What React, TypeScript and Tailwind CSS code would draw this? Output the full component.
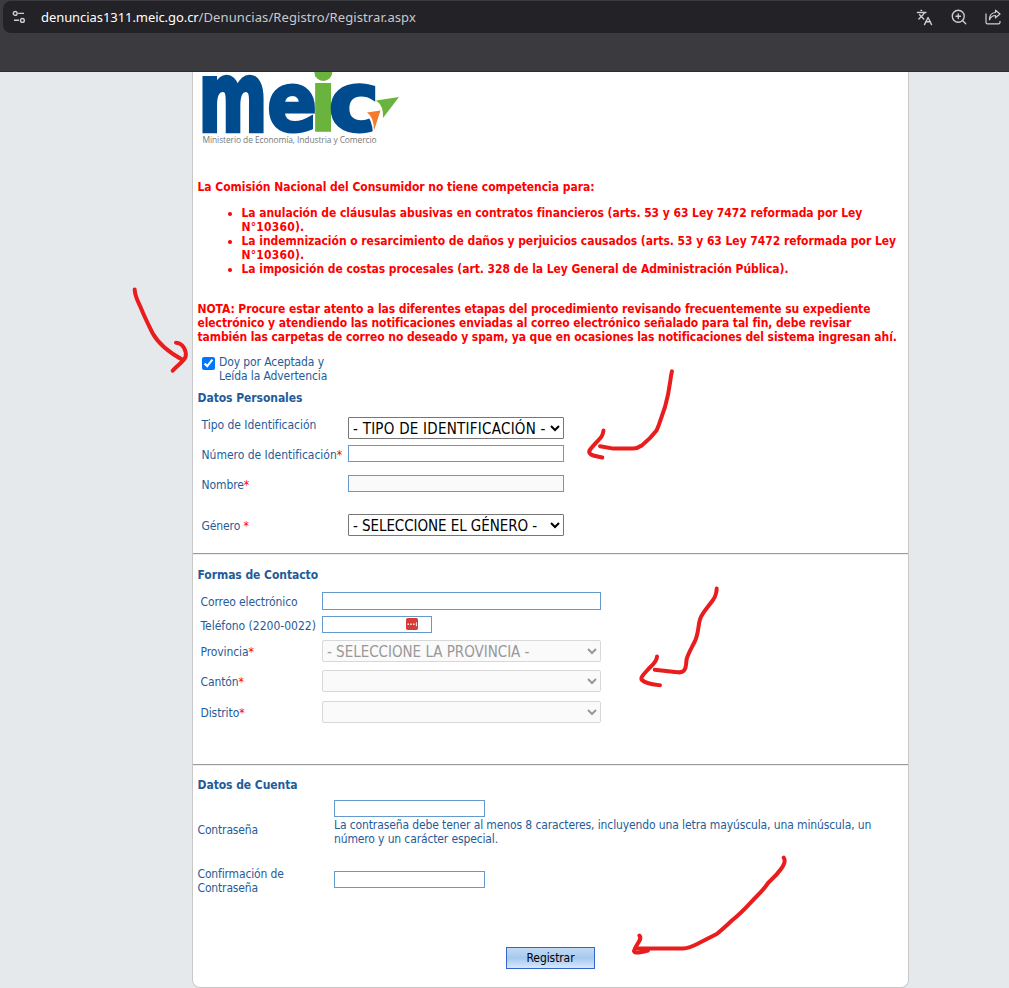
import type { ReactNode } from 'react';
import { Languages, ZoomIn } from 'lucide-react';

const Req = () => <span className="text-[#ff0000]">*</span>;

function BrowserBar() {
  return (
    <header className="h-[72px] shrink-0 border-b border-[#2c2b2f] bg-[#3b3a3f] pt-px pl-[3px]">
      <div className="flex h-8 items-center rounded-l-lg bg-[#232227] pr-2 pl-[9px] text-[#cfcfd2]">
        <svg className="size-[14px]" viewBox="0 0 14 14" fill="none" stroke="currentColor" strokeWidth="1.4">
          <circle cx="3.2" cy="3.4" r="1.9" />
          <path d="M6.2 3.4H12M2 10.2h5" />
          <circle cx="10.4" cy="10.4" r="1.9" />
        </svg>
        <div className="ml-[15px] flex font-['Noto_Sans',sans-serif] text-[13px] leading-5">
          <span className="tracking-[-0.07px] text-white">denuncias1311.meic.go.cr</span>
          <span className="tracking-[0.09px] text-[#c9c9cc]">/Denuncias/Registro/Registrar.aspx</span>
        </div>
        <div className="ml-auto flex items-center gap-[17px]">
          <Languages size={17} strokeWidth={1.9} />
          <ZoomIn size={18} strokeWidth={1.8} />
          <svg className="size-4" viewBox="0 0 16 16" fill="none" stroke="currentColor" strokeWidth="1.2" strokeLinejoin="round">
            <path d="M1 4.500V13.200a1.600 1.600 0 0 0 1.600 1.600h10.800a1.600 1.600 0 0 0 1.600-1.600V12" />
            <path d="M10.500 1.200 15 5l-4.500 3.800V6.500C7.500 6.500 5.600 8 4.500 10.800 4.500 6.500 7 3.700 10.500 3.500z" />
          </svg>
        </div>
      </div>
    </header>
  );
}

function Logo() {
  return (
    <svg className="block h-[78px] w-[220px] shrink-0" viewBox="193 72 220 78">
      <g fontFamily="DejaVu Sans" fontWeight="bold" fontSize="100" fill="#004b8d" stroke="#004b8d" strokeWidth="3">
        <text transform="translate(198.500 130.500) scale(.660 .970)" strokeWidth="4.500">m</text>
        <text transform="translate(267 130.500) scale(.740 .820)" strokeWidth="3.500">e</text>
        <text transform="translate(307.500 132) scale(.910 .890)" fill="#6ab43e" stroke="none">i</text>
        <text transform="translate(328.500 130.500) scale(.860 .820)" strokeWidth="3.500">c</text>
      </g>
      <circle cx="323.300" cy="72" r="9" fill="#6ab43e" />
      <path d="M364.500 112.500 L374 109 L378 98 L386 98 L384 122 L373 134 Q372.500 119 364.500 112.500z" fill="#fff" />
      <path d="M376 100.500 L399 97 L383 118 Q384 106 376 100.500z" fill="#6ab43e" />
      <path d="M367 112.500 L380.500 110.500 L374 130.500 Q374 117 367 112.500z" fill="#f47a2c" />
      <text
        x="202.500" y="143" fontFamily="Open Sans" fontSize="9.800" fill="#77797c"
        textLength="174" lengthAdjust="spacingAndGlyphs"
      >
        Ministerio de Economía, Industria y Comercio
      </text>
    </svg>
  );
}

const Title = ({ className = '', children }: { className?: string; children: ReactNode }) => (
  <h2 className={`pl-[4.500px] font-bold tracking-[-0.06px] ${className}`}>{children}</h2>
);

const field = 'block shrink-0 border border-[#6699cc] bg-white outline-none';
const enabledSelect = 'h-[22px] w-[216px] rounded-[1px] border border-[#767676] bg-white pt-px pr-px text-[15px] text-black';
const disabledSelect = 'h-[22px] w-[279px] rounded-[2px] border border-[#d8d8d8] bg-[#fafafa] pt-px pr-px text-[15px] text-[#989898]';

function Warning() {
  return (
    <section className="mt-[30px] pl-[4.500px] font-bold whitespace-nowrap text-[#ff0000]">
      <p className="tracking-[-0.04px]">La Comisión Nacional del Consumidor no tiene competencia para:</p>
      <ul className="mt-3 list-disc pl-11">
        <li>
          <span className="tracking-[-0.053px]">La anulación de cláusulas abusivas en contratos financieros (arts. 53 y 63 Ley 7472 reformada por Ley</span>
          <br />
          <span className="tracking-[0.2px]">N°10360).</span>
        </li>
        <li>
          <span className="tracking-[-0.045px]">La indemnización o resarcimiento de daños y perjuicios causados (arts. 53 y 63 Ley 7472 reformada por Ley</span>
          <br />
          <span className="tracking-[0.2px]">N°10360).</span>
        </li>
        <li className="tracking-[-0.06px]">La imposición de costas procesales (art. 328 de la Ley General de Administración Pública).</li>
      </ul>
      <p className="mt-[26px]">
        <span className="tracking-[-0.074px]">NOTA: Procure estar atento a las diferentes etapas del procedimiento revisando frecuentemente su expediente</span>
        <br />
        <span className="tracking-[-0.082px]">electrónico y atendiendo las notificaciones enviadas al correo electrónico señalado para tal fin, debe revisar</span>
        <br />
        <span className="tracking-[-0.088px]">también las carpetas de correo no deseado y spam, ya que en ocasiones las notificaciones del sistema ingresan ahí.</span>
      </p>
    </section>
  );
}

function PersonalData() {
  return (
    <section>
      <label className="mt-[11px] flex pl-[9px]">
        <input type="checkbox" defaultChecked className="mt-[2px] mr-1 block size-[13px]" />
        <span>
          Doy por Aceptada y<br />
          Leída la Advertencia
        </span>
      </label>
      <Title className="mt-2">Datos Personales</Title>
      <div className="mt-[12px] flex h-[22px] pl-[8.500px]">
        <span className="w-[146.500px] pt-px tracking-[-0.03px]">Tipo de Identificación</span>
        <select className={`${enabledSelect} tracking-[0.25px]`}>
          <option>- TIPO DE IDENTIFICACIÓN -</option>
        </select>
      </div>
      <div className="mt-1.5 flex h-[17px] items-center pl-[8.500px]">
        <span className="w-[146.500px] pt-[2px] tracking-[-0.02px]">Número de Identificación<Req /></span>
        <input className={`${field} h-[17px] w-[216px]`} />
      </div>
      <div className="mt-[13px] flex h-[17px] items-center pl-[8.500px]">
        <span className="w-[146.500px] pt-[2px]">Nombre<Req /></span>
        <input disabled className="block h-[17px] w-[216px] border border-[#6699cc] bg-[#fafafa]" />
      </div>
      <div className="mt-[22px] flex h-[22px] items-center pl-[8.500px]">
        <span className="w-[146.500px] pt-[2px]">Género <Req /></span>
        <select className={`${enabledSelect} tracking-[-0.07px]`}>
          <option>- SELECCIONE EL GÉNERO -</option>
        </select>
      </div>
    </section>
  );
}

function ContactData() {
  return (
    <section>
      <Title className="mt-[13px]">Formas de Contacto</Title>
      <div className="mt-[10px] flex h-[18px] items-center pl-[7.500px]">
        <span className="w-[121.500px] pt-[2px]">Correo electrónico</span>
        <input className={`${field} h-[18px] w-[279px]`} />
      </div>
      <div className="mt-1.5 flex h-[17px] items-center pl-[7.500px]">
        <span className="w-[121.500px] pt-[2px] tracking-[0px]">Teléfono (2200-0022)</span>
        <div className={`${field} flex h-[17px] w-[110px] items-center justify-end pr-[13px] pb-px`}>
          <svg className="h-3 w-[12px]" viewBox="0 0 12 12">
            <rect width="12" height="12" rx="1.800" fill="#d93a36" />
            <path d="M1.500 5.500h1.400v1.400H1.500zM4.300 5.500h1.400v1.400H4.300zM7.100 5.500h1.400v1.400H7.100zM9.900 4.200h.9v4h-.9z" fill="#fff" />
          </svg>
        </div>
      </div>
      <div className="mt-[7px] flex h-[22px] items-center pl-[7.500px]">
        <span className="w-[121.500px] pt-[2px]">Provincia<Req /></span>
        <select disabled className={`${disabledSelect} tracking-[-0.02px]`}>
          <option>- SELECCIONE LA PROVINCIA -</option>
        </select>
      </div>
      <div className="mt-2 flex h-[22px] items-center pl-[7.500px]">
        <span className="w-[121.500px] pt-[2px]">Cantón<Req /></span>
        <select disabled className={disabledSelect} />
      </div>
      <div className="mt-[9px] flex h-[22px] items-center pl-[7.500px]">
        <span className="w-[121.500px] pt-[2px]">Distrito<Req /></span>
        <select disabled className={disabledSelect} />
      </div>
    </section>
  );
}

function AccountData() {
  return (
    <section>
      <Title className="mt-[12px]">Datos de Cuenta</Title>
      <div className="mt-[8px] flex items-center pl-[4.500px]">
        <span className="w-[136.500px] pt-[13px] tracking-[-0.15px]">Contraseña</span>
        <div className="whitespace-nowrap">
          <input type="password" className={`${field} mb-px h-[17px] w-[151px]`} />
          <span className="tracking-[-0.115px]">La contraseña debe tener al menos 8 caracteres, incluyendo una letra mayúscula, una minúscula, un</span>
          <br />
          <span className="tracking-[-0.134px]">número y un carácter especial.</span>
        </div>
      </div>
      <div className="mt-[21px] flex items-start pl-[4.500px] tracking-[-0.15px]">
        <span className="w-[136.500px]">
          Confirmación de
          <br />
          Contraseña
        </span>
        <input type="password" className={`${field} mt-1 h-[17px] w-[151px]`} />
      </div>
      <button className="mt-[52px] ml-[313px] block h-[22px] w-[89px] border border-[#3366cc] bg-linear-to-b from-[#c3daf3] from-0% via-[#a5c9ef] via-50% to-[#d9e8fb] to-100% tracking-[-0.09px] text-black">
        Registrar
      </button>
    </section>
  );
}

const Divider = ({ className }: { className: string }) => (
  <hr className={`h-[2px] border-t border-b border-t-[#9a9a9a] border-b-[#eeeeee] ${className}`} />
);

function Strokes() {
  return (
    <svg
      className="pointer-events-none absolute inset-0 h-[988px] w-[1009px]"
      viewBox="0 0 1009 988" fill="none" stroke="#e91d1d" strokeWidth="4" strokeLinecap="round" strokeLinejoin="round"
    >
      <path d="M134.700 289.500C135 297 138 301 140.500 307C145 318 149 326 152.500 333C158 343 168 352 183 360" />
      <path d="M176 342.700C183 343 187 351 185.500 357C184 361 178 365 172.700 370.700" />
      <path d="M672 371.300C670 378 670.500 388 665 407C661 418 659 426 656.500 430.500C650 439 646 442 641.700 445.500C638 448 636 448.600 633 448.600H613.500L600 446.200" />
      <path d="M603.500 430.500C603 434 602 437 599 439.500C595 444 592 447 589.500 450.500C588 455 593 455.500 602.300 457.500" />
      <path d="M716.700 588.500C716.500 593 716 596 713 600C708 607 703 612 700.500 618C698 624 699 632 695 641C691 649 688 654 686.700 659C685.500 665 687 667 684 670.500C682 673 679 672.500 675 672L654.700 669.700" />
      <path d="M657 656.500C657 662 652 665 647.500 670C643 675 640 678 642 680C646 684 653 684.500 660 685.300" />
      <path d="M783.700 857.700C786 861 784 865 781 869C776 876 772 879 768.500 882.500C764 889 761 892 757 896C748 905 744 911 732.500 920C725 927 722 930 716.700 934L701 942C695 945 690 948 683 948.600H637" />
      <path d="M639.300 935.500C643 939 636 944 634 951C635 954 642 952 648 950.500" />
    </svg>
  );
}

export default function App() {
  return (
    <div className="relative flex h-[988px] w-[1009px] flex-col overflow-hidden bg-[#e5e9ec] font-['DejaVu_Sans_Condensed','DejaVu_Sans',sans-serif] text-[12px] leading-[14px] tracking-[-0.1px] text-[#1f5c99]">
      <BrowserBar />
      <main className="ml-[192px] flex h-[916px] w-[717px] flex-col rounded-b-[8px] border border-t-0 border-[#c8c8c8] bg-white">
        <Logo />
        <Warning />
        <PersonalData />
        <Divider className="mt-[17px]" />
        <ContactData />
        <Divider className="mt-[41px]" />
        <AccountData />
      </main>
      <Strokes />
    </div>
  );
}
